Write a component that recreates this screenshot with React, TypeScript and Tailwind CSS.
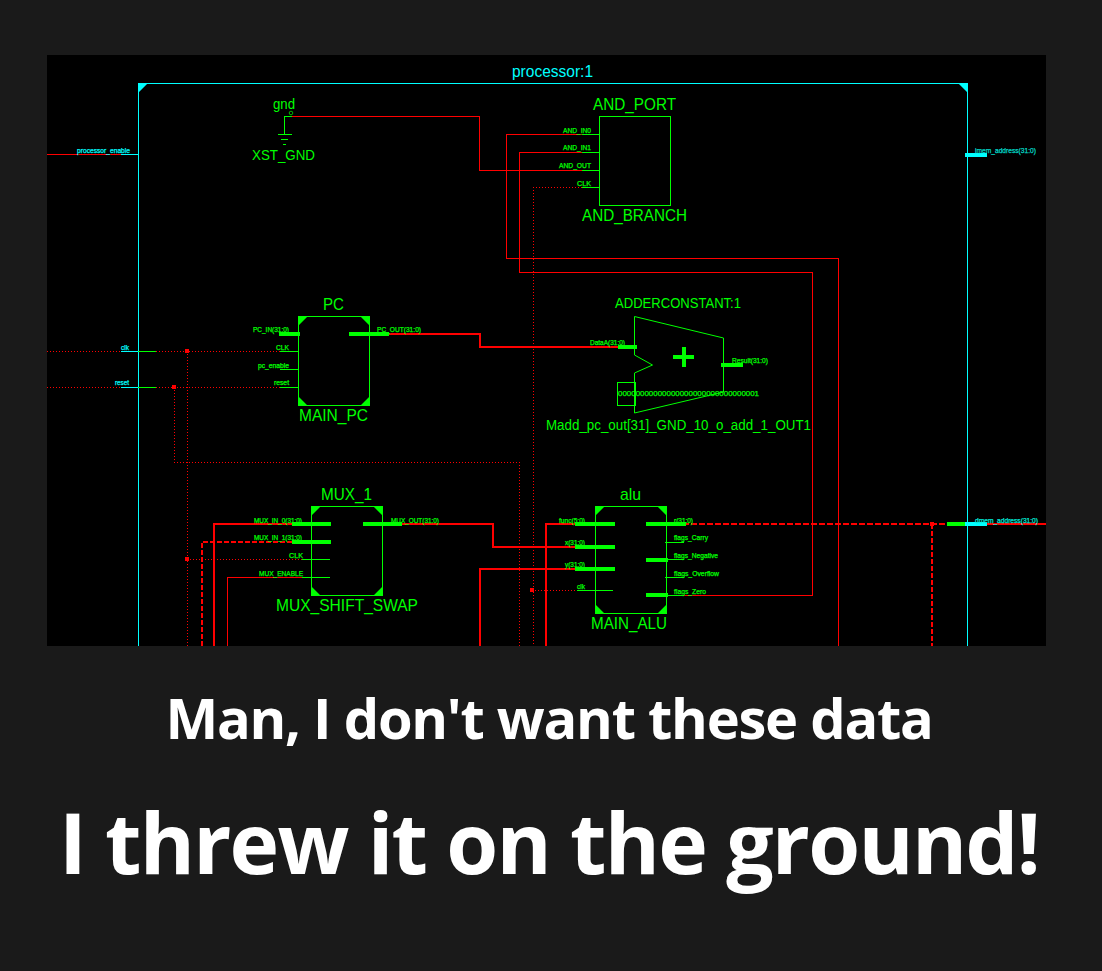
const GREEN = "#00ff00";
const RED = "#ff0000";
const CYAN = "#00ffff";

type Wire = { d: string; w?: number; dash?: string; c?: string };

const wires: Wire[] = [
  // thin red nets
  { d: "M47 154.5H121" },
  { d: "M292 116.5H479.5V170.5H582" },
  { d: "M582 134.5H506.5V258.5H838.5V646" },
  { d: "M582 152.5H519.5V272.5H812.5V595.5H683" },
  { d: "M302 577.5H227.5V646" },
  { d: "M985 524H1046", w: 2 },
  // clock and reset, dotted
  { d: "M582 187.5H533.5V646", dash: "1 2" },
  { d: "M47 351.5H121M156 351.5H280", dash: "1 2" },
  { d: "M187.5 351V646", dash: "1 2" },
  { d: "M47 387.5H121M156 387.5H280", dash: "1 2" },
  { d: "M174.5 387V462.5H519.5V646", dash: "1 2" },
  { d: "M187 559.5H302", dash: "1 2" },
  { d: "M532 590.5H577", dash: "1 2" },
  // buses
  { d: "M387 334H480V347H618", w: 2 },
  { d: "M292 524H214V646", w: 2 },
  { d: "M292 542H201.5V646", w: 2, dash: "5 2" },
  { d: "M400 524H493V547H578", w: 2 },
  { d: "M578 524H546V646", w: 2 },
  { d: "M578 569H480V646", w: 2 },
  { d: "M683 524H947", w: 2, dash: "6 2" },
  { d: "M932 524V646", w: 2, dash: "5 2" },
  // pin stubs
  { d: "M121 154.5H138", c: CYAN },
  { d: "M121 351.5H138", c: CYAN },
  { d: "M121 387.5H138", c: CYAN },
  { d: "M138 351.5H156M138 387.5H156", c: GREEN },
  { d: "M280 351.5H298M280 369.5H298M280 387.5H298", c: GREEN },
  { d: "M582 134.5H599M582 152.5H599M582 170.5H599M582 187.5H599", c: GREEN },
  { d: "M302 559.5H330M302 577.5H330", c: GREEN },
  { d: "M577 590.5H613", c: GREEN },
  { d: "M665 542.5H684M665 559.5H684M665 577.5H684M665 595.5H683", c: GREEN },
  // gnd symbol
  { d: "M292 116.5H284.5V134M278 134.5H292M281 139.5H288M283 144.5H286", c: GREEN },
  // green bus pins
  { d: "M279 334H300M349 334H389", w: 4, c: GREEN },
  { d: "M618 347H637M721 365H743", w: 4, c: GREEN },
  { d: "M292 524H331M292 542H331M363 524H402", w: 4, c: GREEN },
  { d: "M575 524H615M575 547H615M575 569H615", w: 4, c: GREEN },
  { d: "M646 524H686M646 560H668M646 595H668", w: 4, c: GREEN },
  { d: "M947 524H965", w: 4, c: GREEN },
  { d: "M965 524H987M965 155H987", w: 4, c: CYAN },
  // plus sign of the adder
  { d: "M673 357H694M683.5 347V367", w: 4, c: GREEN },
];

const dots = [
  [187, 351],
  [174, 387],
  [187, 559],
  [532, 590],
  [932, 524],
];

type Box = { x: number; y: number; w: number; h: number };
const blocks: Box[] = [
  { x: 298.5, y: 316.5, w: 71, h: 89 },
  { x: 311.5, y: 506.5, w: 71, h: 89 },
  { x: 595.5, y: 506.5, w: 71, h: 107 },
];

type Label = { t: string; x: number; x2: number; y: number; s?: number; c?: string; bold?: number };

const bigLabels: Label[] = [
  { t: "processor:1", x: 512, x2: 593, y: 77, s: 16, c: CYAN },
  { t: "gnd", x: 273, x2: 295, y: 109 },
  { t: "XST_GND", x: 252, x2: 315, y: 160 },
  { t: "AND_PORT", x: 593, x2: 676, y: 110, s: 16 },
  { t: "AND_BRANCH", x: 582, x2: 687, y: 221, s: 16 },
  { t: "PC", x: 323, x2: 344, y: 310, s: 17 },
  { t: "MAIN_PC", x: 299, x2: 368, y: 421, s: 17 },
  { t: "ADDERCONSTANT:1", x: 615, x2: 741, y: 308 },
  { t: "Madd_pc_out[31]_GND_10_o_add_1_OUT1", x: 546, x2: 811, y: 430 },
  { t: "MUX_1", x: 321, x2: 372, y: 500, s: 17 },
  { t: "MUX_SHIFT_SWAP", x: 276, x2: 418, y: 611, s: 17 },
  { t: "alu", x: 620, x2: 641, y: 500, s: 17 },
  { t: "MAIN_ALU", x: 591, x2: 667, y: 629, s: 17 },
];

const smallLabels: Label[] = [
  { t: "processor_enable", x: 77, x2: 130, y: 153, c: CYAN },
  { t: "clk", x: 121, x2: 129, y: 350, c: CYAN },
  { t: "reset", x: 115, x2: 129, y: 385, c: CYAN },
  { t: "imem_address(31:0)", x: 975, x2: 1036, y: 153, c: "#00d8c8" },
  { t: "dmem_address(31:0)", x: 975, x2: 1038, y: 523, c: "#00e8d8" },
  { t: "PC_IN(31:0)", x: 253, x2: 289, y: 332 },
  { t: "CLK", x: 276, x2: 289, y: 350 },
  { t: "pc_enable", x: 258, x2: 289, y: 368 },
  { t: "reset", x: 274, x2: 289, y: 385 },
  { t: "PC_OUT(31:0)", x: 377, x2: 421, y: 332 },
  { t: "AND_IN0", x: 563, x2: 591, y: 133 },
  { t: "AND_IN1", x: 563, x2: 591, y: 150 },
  { t: "AND_OUT", x: 559, x2: 591, y: 168 },
  { t: "CLK", x: 577, x2: 591, y: 186 },
  { t: "DataA(31:0)", x: 590, x2: 625, y: 345 },
  { t: "Result(31:0)", x: 732, x2: 768, y: 363 },
  { t: "00000000000000000000000000000001", x: 618, x2: 759, y: 396, s: 8 },
  { t: "MUX_IN_0(31:0)", x: 254, x2: 302, y: 523 },
  { t: "MUX_IN_1(31:0)", x: 254, x2: 302, y: 540 },
  { t: "CLK", x: 289, x2: 303, y: 558 },
  { t: "MUX_ENABLE", x: 259, x2: 303, y: 576 },
  { t: "MUX_OUT(31:0)", x: 391, x2: 439, y: 523 },
  { t: "func(5:0)", x: 559, x2: 585, y: 523 },
  { t: "x(31:0)", x: 565, x2: 585, y: 545 },
  { t: "y(31:0)", x: 565, x2: 585, y: 567 },
  { t: "clk", x: 577, x2: 585, y: 589 },
  { t: "r(31:0)", x: 674, x2: 693, y: 523 },
  { t: "flags_Carry", x: 674, x2: 708, y: 540 },
  { t: "flags_Negative", x: 674, x2: 718, y: 558 },
  { t: "flags_Overflow", x: 674, x2: 719, y: 576 },
  { t: "flags_Zero", x: 674, x2: 706, y: 594 },
];

// box with the four filled corner marks the schematic viewer draws
const Block = ({ x, y, w, h }: Box) => {
  const r = x + w;
  const b = y + h;
  return (
    <g>
      <rect x={x} y={y} width={w} height={h} fill="none" stroke={GREEN} />
      <path
        fill={GREEN}
        d={`M${x} ${y}h9l-9 9zM${r} ${y}h-9l9 9zM${x} ${b}h9l-9 -9zM${r} ${b}h-9l9 -9z`}
      />
    </g>
  );
};

const SchemText = ({ t, x, x2, y, s = 14, c = GREEN, bold = 0 }: Label) => (
  <text
    x={x}
    y={y}
    fontSize={s}
    fill={c}
    stroke={c}
    strokeWidth={bold}
    textLength={x2 - x}
    lengthAdjust="spacingAndGlyphs"
  >
    {t}
  </text>
);

const Schematic = () => (
  <svg
    viewBox="47 55 999 591"
    className="block h-[591px] w-[999px] bg-black font-['Liberation_Sans',Arial,sans-serif] font-normal"
  >
    {/* processor frame */}
    <path d="M138.5 646V83.5H967.5V646" fill="none" stroke={CYAN} />
    <path d="M138 83h10l-10 10zM968 83h-10l10 10z" fill={CYAN} />

    {wires.map((wire, i) => (
      <path
        key={i}
        d={wire.d}
        fill="none"
        stroke={wire.c ?? RED}
        strokeWidth={wire.w ?? 1}
        strokeDasharray={wire.dash}
        shapeRendering="crispEdges"
      />
    ))}
    {dots.map(([x, y]) => (
      <rect key={`${x}-${y}`} x={x - 2} y={y - 2} width={4} height={4} fill={RED} />
    ))}

    {/* blocks */}
    <rect x={599.5} y={116.5} width={71} height={89} fill="none" stroke={GREEN} />
    {blocks.map((box) => (
      <Block key={box.x} {...box} />
    ))}
    <path
      d="M634.5 355V316.5L723.5 338V392L634.5 413V373L652.5 365L634.5 355"
      fill="none"
      stroke={GREEN}
    />
    <rect x={617.5} y={382.5} width={18} height={23} fill="none" stroke={GREEN} />
    <circle cx={291} cy={113} r={1.8} fill="none" stroke={GREEN} strokeWidth={0.7} />

    {bigLabels.map((label) => (
      <SchemText key={label.t} {...label} />
    ))}
    {smallLabels.map((label) => (
      <SchemText key={`${label.t}-${label.y}`} s={7} bold={0.25} {...label} />
    ))}
  </svg>
);

export default function App() {
  return (
    <div className="h-[971px] w-[1102px] bg-[#1a1a1a] pt-[55px] font-['Open_Sans',sans-serif] font-bold text-white">
      <div className="pl-[47px]">
        <Schematic />
      </div>
      <div className="flex flex-col items-center pr-[4px]">
        <p className="mt-[33px] text-[56px] leading-[76px] tracking-[-1.25px]">Man, I don't want these data</p>
        <p className="mt-[31px] text-[84px] leading-[112px] tracking-[-1.76px]">I threw it on the ground!</p>
      </div>
    </div>
  );
}
